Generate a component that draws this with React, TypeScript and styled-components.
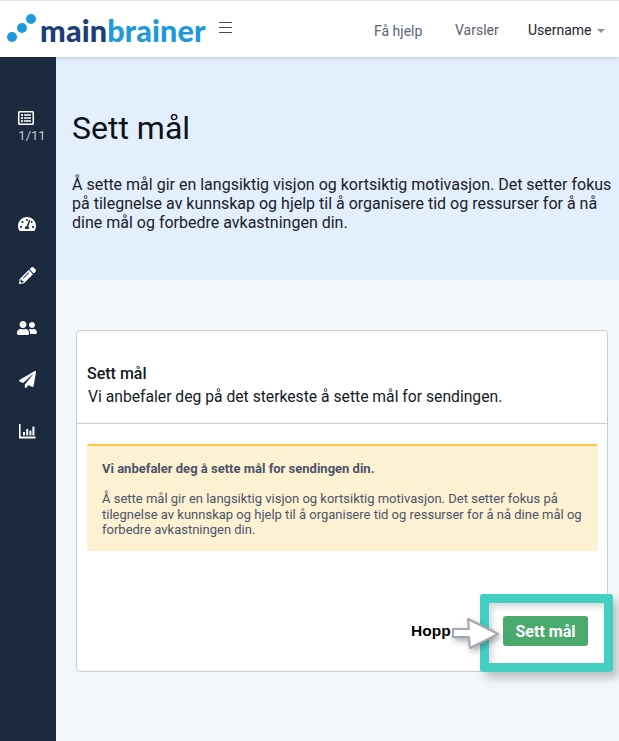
import React from "react";
import styled, { createGlobalStyle } from "styled-components";
import { FaTachometerAlt, FaPencilAlt, FaUserFriends, FaPaperPlane, FaRegListAlt } from "react-icons/fa";

const Global = createGlobalStyle`
  html, body { margin: 0; padding: 0; background: #f4f7fa; overflow: hidden; }
  body { font-family: Roboto, "Liberation Sans", sans-serif; color: #1c2530; }
  * { box-sizing: border-box; }
`;
const Page = styled.div`
  position: relative; width: 619px; height: 741px; overflow: hidden;
  display: flex; flex-direction: column; border-top: 1px solid #dcdfe3;
`;
const TopBar = styled.header`
  height: 56px; flex: none; background: #fff; display: flex; align-items: center;
  box-shadow: 0 1px 4px rgba(40,60,90,.22); position: relative; z-index: 2;
`;
const Logo = styled.div`width: 206px; height: 56px; position: relative; flex: none;`;
const LogoMark = styled.svg`position: absolute; left: 6px; top: 13px;`;
const LogoText = styled.div`
  position: absolute; left: 40px; top: 11px; font-family: Lato, sans-serif; font-weight: 900; font-size: 30.5px;
  line-height: 36px; letter-spacing: .15px; color: #1f9ad9; white-space: nowrap;
`;
const LogoDark = styled.span`color: #1d3c78;`;
const Burger = styled.div`
  width: 13px; height: 11px; margin: -3px 0 0 13px; display: flex; flex-direction: column; justify-content: space-between;
  i { display: block; height: 1.4px; background: #4a4a55; }
`;
const Nav = styled.nav`margin-left: auto; display: flex; align-items: center; font-size: 14px; padding: 2px 14px 0 0;`;
const NavItem = styled.span<{ $dark?: boolean; $w: number; $drop?: boolean }>`
  color: ${p => (p.$dark ? "#1c2530" : "#596270")}; width: ${p => p.$w}px; white-space: nowrap;
  padding-top: ${p => (p.$drop ? "2px" : "0")};
`;
const Caret = styled.i`
  display: inline-block; margin-left: 5px; vertical-align: 2px; border-top: 4px solid #8a9099;
  border-left: 4px solid transparent; border-right: 4px solid transparent;
`;
const Body = styled.div`flex: 1; display: flex; min-height: 0;`;
const Side = styled.aside`
  width: 56px; flex: none; background: #1b2a3e; color: #fff; display: flex; flex-direction: column; align-items: center;
  padding-top: 53px;
`;
const Progress = styled.div`
  display: flex; flex-direction: column; align-items: center; font-size: 13px; color: #c3c8cf; line-height: 15px;
  margin-bottom: 70px; padding-left: 8px;
  svg { color: #fff; margin-left: -12px; margin-bottom: 2px; }
`;
const SideIcon = styled.div`
  height: 21px; margin-bottom: 31px; width: 20px; margin-right: 2px; display: flex; align-items: center; justify-content: center; color: #fff;
`;
const Main = styled.main`flex: 1; min-width: 0; display: flex; flex-direction: column;`;
const Hero = styled.section`
  height: 223px; flex: none; background: #e3effc; padding: 52px 0 0 16px;
`;
const Title = styled.h1`margin: 0 0 28px; font-weight: 400; font-size: 32px; line-height: 38px; color: #0d1218;`;
const Lead = styled.p`margin: 0; width: 545px; font-size: 16px; line-height: 19.2px; color: #1a2029;`;
const Content = styled.section`padding: 50px 11px 0 20px;`;
const Card = styled.div`
  height: 342px; background: #fff; border: 1px solid #c9ccd1; border-radius: 4px; display: flex; flex-direction: column;
`;
const CardHead = styled.div`
  height: 93px; flex: none; border-bottom: 1px solid #c9ccd1; padding: 33px 10px 0 10px; color: #14191f;
`;
const CardTitle = styled.div`font-size: 16px; line-height: 19px; font-weight: 500;`;
const CardSub = styled.div`font-size: 15.7px; line-height: 20px; margin-top: 4px; padding-left: 1px; white-space: nowrap;`;
const Notice = styled.div`
  margin: 20px 9px 0 10px; height: 107px; background: #fdf1d3; border-top: 2px solid #ffc73d; border-radius: 2px;
  padding: 15px 15px 0; color: #4b5468; font-size: 13px; line-height: 15.4px;
`;
const NoticeTitle = styled.div`font-weight: 700; margin-bottom: 15px;`;
const Actions = styled.div`
  margin-top: auto; height: 30px; margin-bottom: 25px; display: flex; justify-content: flex-end; align-items: center; padding-right: 19px;
`;
const Skip = styled.span`
  position: absolute; left: 411px; top: 621px; font: 700 15.5px/18px "Liberation Sans", sans-serif; color: #000;
`;
const Primary = styled.button`
  position: relative; z-index: 3; width: 85px; height: 30px; border: 0; border-radius: 3px; background: #4aaa6e; color: #fff;
  font: 700 16px Roboto, sans-serif; padding: 0;
`;
const Highlight = styled.div`
  position: absolute; left: 480px; top: 593px; width: 133px; height: 78px; border: 9px solid #43d0c3; border-radius: 3px;
  box-shadow: 5px 6px 8px rgba(50,70,70,.3), inset 3px 4px 6px rgba(50,70,70,.2);
`;
const Arrow = styled.svg`position: absolute; left: 448px; top: 611px; z-index: 4; overflow: visible;`;
const ArrowShape = styled.path`filter: drop-shadow(2px 3px 3px rgba(40,50,60,.4));`;

export default function App() {
  return (
    <Page>
      <Global />
      <TopBar>
        <Logo>
          <LogoMark width="30" height="30" viewBox="0 0 30 30">
            <circle cx="6" cy="23" r="5" fill="#1f9ad9" />
            <circle cx="16" cy="14" r="5" fill="#1f9ad9" />
            <circle cx="25" cy="5" r="5" fill="#1f9ad9" />
          </LogoMark>
          <LogoText><LogoDark>main</LogoDark>brainer</LogoText>
        </Logo>
        <Burger><i /><i /><i /></Burger>
        <Nav>
          <NavItem $w={81} $drop>Få hjelp</NavItem>
          <NavItem $w={73}>Varsler</NavItem>
          <NavItem $dark $w={77}>Username<Caret /></NavItem>
        </Nav>
      </TopBar>
      <Body>
        <Side>
          <Progress><FaRegListAlt size={16} />1/11</Progress>
          <SideIcon><FaTachometerAlt size={18} /></SideIcon>
          <SideIcon><FaPencilAlt size={17} /></SideIcon>
          <SideIcon><FaUserFriends size={20} /></SideIcon>
          <SideIcon><FaPaperPlane size={17} /></SideIcon>
          <SideIcon>
            <svg width="17" height="15" viewBox="0 0 17 15" fill="#fff">
              <path d="M0 0h1.6v12.6H16.5V14.4H0z" />
              <rect x="4" y="8" width="2" height="3.4" />
              <rect x="7.2" y="5" width="2" height="6.4" />
              <rect x="10.4" y="6.6" width="2" height="4.8" />
              <rect x="13.4" y="2.6" width="2" height="8.8" />
            </svg>
          </SideIcon>
        </Side>
        <Main>
          <Hero>
            <Title>Sett mål</Title>
            <Lead>Å sette mål gir en langsiktig visjon og kortsiktig motivasjon. Det setter fokus på tilegnelse av kunnskap og hjelp til å organisere tid og ressurser for å nå dine mål og forbedre avkastningen din.</Lead>
          </Hero>
          <Content>
            <Card>
              <CardHead>
                <CardTitle>Sett mål</CardTitle>
                <CardSub>Vi anbefaler deg på det sterkeste å sette mål for sendingen.</CardSub>
              </CardHead>
              <Notice>
                <NoticeTitle>Vi anbefaler deg å sette mål for sendingen din.</NoticeTitle>
                Å sette mål gir en langsiktig visjon og kortsiktig motivasjon. Det setter fokus på tilegnelse av kunnskap og hjelp til å organisere tid og ressurser for å nå dine mål og forbedre avkastningen din.
              </Notice>
              <Actions><Primary>Sett mål</Primary></Actions>
            </Card>
          </Content>
        </Main>
      </Body>
      <Highlight />
      <Skip>Hopp</Skip>
      <Arrow width="52" height="40" viewBox="0 0 52 40">
        <ArrowShape d="M5 17 H21 L20 7 L50 22 L22 36 L21 25 H5 Z" fill="#fff" stroke="#a4a8ae" strokeWidth="2" strokeLinejoin="round" />
      </Arrow>
    </Page>
  );
}
